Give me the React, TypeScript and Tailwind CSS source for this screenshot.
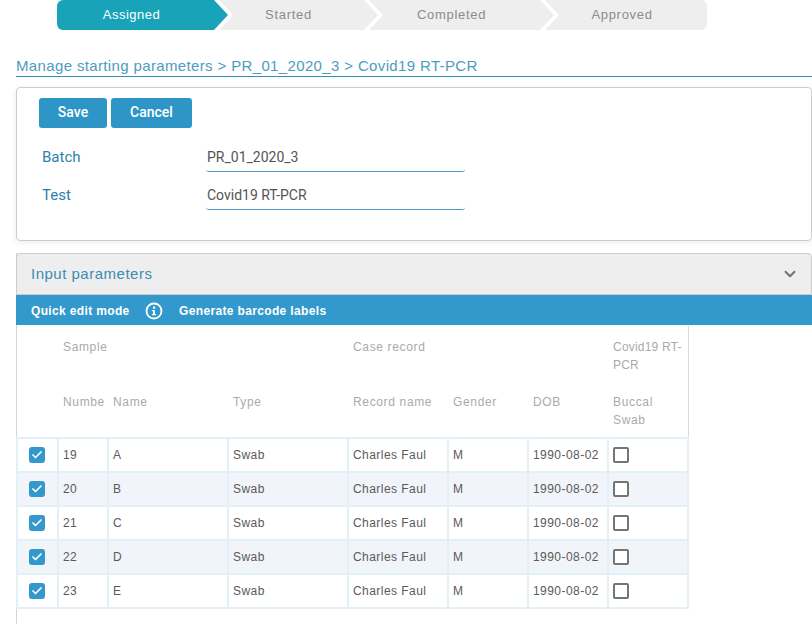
import { ChevronDown, Check } from "lucide-react";

const rows = [
  { number: "19", name: "A" },
  { number: "20", name: "B" },
  { number: "21", name: "C" },
  { number: "22", name: "D" },
  { number: "23", name: "E" },
];

const App = () => {
  return (
    <div className="w-[812px] h-[624px] overflow-hidden bg-white [font-family:Liberation_Sans,sans-serif]">
      {/* Stepper */}
      <div className="flex h-[30px] ml-[57px] text-[13px] tracking-[0.7px]">
        <div className="w-[171px] h-full pr-[22px] flex items-center justify-center font-medium tracking-[0.5px] text-white bg-[#18a3b9] rounded-l-[6px] [clip-path:polygon(0_0,157px_0,100%_50%,157px_100%,0_100%)]">
          Assigned
        </div>
        <div className="w-[159px] h-full -ml-[9px] pr-[20px] flex items-center justify-center text-[#8c8c8c] bg-[#eeeeee] [clip-path:polygon(0_0,145px_0,100%_50%,145px_100%,0_100%,14px_50%)]">
          Started
        </div>
        <div className="w-[185px] h-full -ml-[9px] pr-[20px] flex items-center justify-center text-[#8c8c8c] bg-[#eeeeee] [clip-path:polygon(0_0,171px_0,100%_50%,171px_100%,0_100%,14px_50%)]">
          Completed
        </div>
        <div className="w-[162px] h-full -ml-[9px] pr-[8px] flex items-center justify-center text-[#8c8c8c] bg-[#eeeeee] rounded-r-[6px] [clip-path:polygon(0_0,100%_0,100%_100%,0_100%,14px_50%)]">
          Approved
        </div>
      </div>

      {/* Title */}
      <div className="ml-4 mt-[25px] h-[22px] border-b border-[#2f90bd] text-[15px] leading-[21px] tracking-[0.36px] text-[#4b9dc0]">
        Manage starting parameters &gt; PR_01_2020_3 &gt; Covid19 RT-PCR
      </div>

      {/* Batch form */}
      <div className="ml-4 mt-[10px] w-[796px] h-[154px] border border-[#cccccc] rounded-[4px] shadow-[0_2px_6px_rgba(0,0,0,0.08)] pt-[10px] pl-[22px] [font-family:Roboto,sans-serif]">
        <div className="flex gap-1">
          <button className="w-[68px] h-[30px] pb-[2px] bg-[#2e96c6] text-white text-[14px] font-medium rounded-[3px]">Save</button>
          <button className="w-[81px] h-[30px] pb-[2px] bg-[#2e96c6] text-white text-[14px] font-medium rounded-[3px]">Cancel</button>
        </div>
        <div className="flex items-start mt-[15px] h-[29px]">
          <span className="w-[167px] pl-[3px] text-[15px] leading-[28px] text-[#2b82aa]">Batch</span>
          <span className="w-[259px] h-[29px] pl-[1px] text-[14px] leading-[28px] text-[#555555] border-b border-[#4f9cc0] rounded-b-[3px]">PR_01_2020_3</span>
        </div>
        <div className="flex items-start mt-[9px] h-[29px]">
          <span className="w-[167px] pl-[3px] text-[15px] leading-[28px] text-[#2b82aa]">Test</span>
          <span className="w-[259px] h-[29px] pl-[1px] text-[14px] leading-[28px] text-[#555555] border-b border-[#4f9cc0] rounded-b-[3px]">Covid19 RT-PCR</span>
        </div>
      </div>

      {/* Input parameters */}
      <div className="ml-4 mt-[12px] w-[796px] h-[372px] border-l border-[#d4d4d4]">
        <div className="-ml-px h-[42px] bg-[#eeeeee] border border-[#cccccc] rounded-t-[4px] flex items-center justify-between pl-[14px] pr-[12px]">
          <span className="text-[15px] tracking-[0.5px] text-[#3a8db3]">Input parameters</span>
          <ChevronDown className="w-[18px] h-[18px] text-[#707070]" strokeWidth={2.5} />
        </div>
        <div className="h-[30px] -ml-px bg-[#3398cb] flex items-center pl-[15px] pt-[1px] text-[12px] font-bold tracking-[0.35px] text-white">
          <span className="w-[98px] whitespace-nowrap">Quick edit mode</span>
          <svg className="ml-[16px] w-[18px] h-[18px]" viewBox="0 0 18 18" fill="none">
            <circle cx="9" cy="9" r="7.5" stroke="white" strokeWidth="1.8" />
            <rect x="8" y="4.5" width="2.2" height="2.2" rx="0.5" fill="white" />
            <path d="M6.9 7.9h3v4.1h1.1v1.3H7v-1.3h1.1V9.2H6.9z" fill="white" />
          </svg>
          <span className="ml-[16px]">Generate barcode labels</span>
        </div>

        <table className="mt-px -ml-px w-[671px] table-fixed border-collapse border-r border-b border-[#d5dde2] text-[12px] tracking-[0.45px] text-[#5a5a5a]">
          <colgroup>
            <col className="w-[41px]" />
            <col className="w-[50px]" />
            <col className="w-[120px]" />
            <col className="w-[120px]" />
            <col className="w-[100px]" />
            <col className="w-[80px]" />
            <col className="w-[80px]" />
            <col className="w-[80px]" />
          </colgroup>
          <thead className="text-[#aaaaaa] font-normal leading-[18px] text-left tracking-[0.65px]">
            <tr className="h-[58px] align-top">
              <th></th>
              <th colSpan={3} className="font-normal pl-[5px] pt-[12px]">Sample</th>
              <th colSpan={3} className="font-normal pl-[5px] pt-[12px]">Case record</th>
              <th className="font-normal pl-[5px] pt-[12px] tracking-[0.2px]">Covid19 RT-PCR</th>
            </tr>
            <tr className="h-[54px] align-top border-b-2 border-[#d5e3ea]">
              <th></th>
              <th className="font-normal pl-[5px] pt-[9px] whitespace-nowrap">Numbe</th>
              <th className="font-normal pl-[5px] pt-[9px]">Name</th>
              <th className="font-normal pl-[5px] pt-[9px]">Type</th>
              <th className="font-normal pl-[5px] pt-[9px]">Record name</th>
              <th className="font-normal pl-[5px] pt-[9px]">Gender</th>
              <th className="font-normal pl-[5px] pt-[9px]">DOB</th>
              <th className="font-normal pl-[5px] pt-[9px]">Buccal<br />Swab</th>
            </tr>
          </thead>
          <tbody>
            {rows.map((row, i) => (
              <tr key={row.number} className={`h-[34px] ${i % 2 === 1 ? "bg-[#f1f4f8]" : "bg-white"}`}>
                <td className="border-2 border-[#e2f0f7] pl-[11px]">
                  <span className="w-4 h-4 rounded-[3px] bg-[#3398cb] flex items-center justify-center">
                    <Check className="w-3 h-3 text-white" strokeWidth={3.5} />
                  </span>
                </td>
                <td className="border-2 border-[#e2f0f7] pl-[4px]">{row.number}</td>
                <td className="border-2 border-[#e2f0f7] pl-[4px]">{row.name}</td>
                <td className="border-2 border-[#e2f0f7] pl-[4px]">Swab</td>
                <td className="border-2 border-[#e2f0f7] pl-[4px]">Charles Faul</td>
                <td className="border-2 border-[#e2f0f7] pl-[4px]">M</td>
                <td className="border-2 border-[#e2f0f7] pl-[4px] whitespace-nowrap">1990-08-02</td>
                <td className="border-2 border-[#e2f0f7] pl-[4px]">
                  <span className="block w-4 h-4 rounded-[2px] border-2 border-[#757575] bg-white"></span>
                </td>
              </tr>
            ))}
          </tbody>
        </table>
      </div>
    </div>
  );
};

export default App;
